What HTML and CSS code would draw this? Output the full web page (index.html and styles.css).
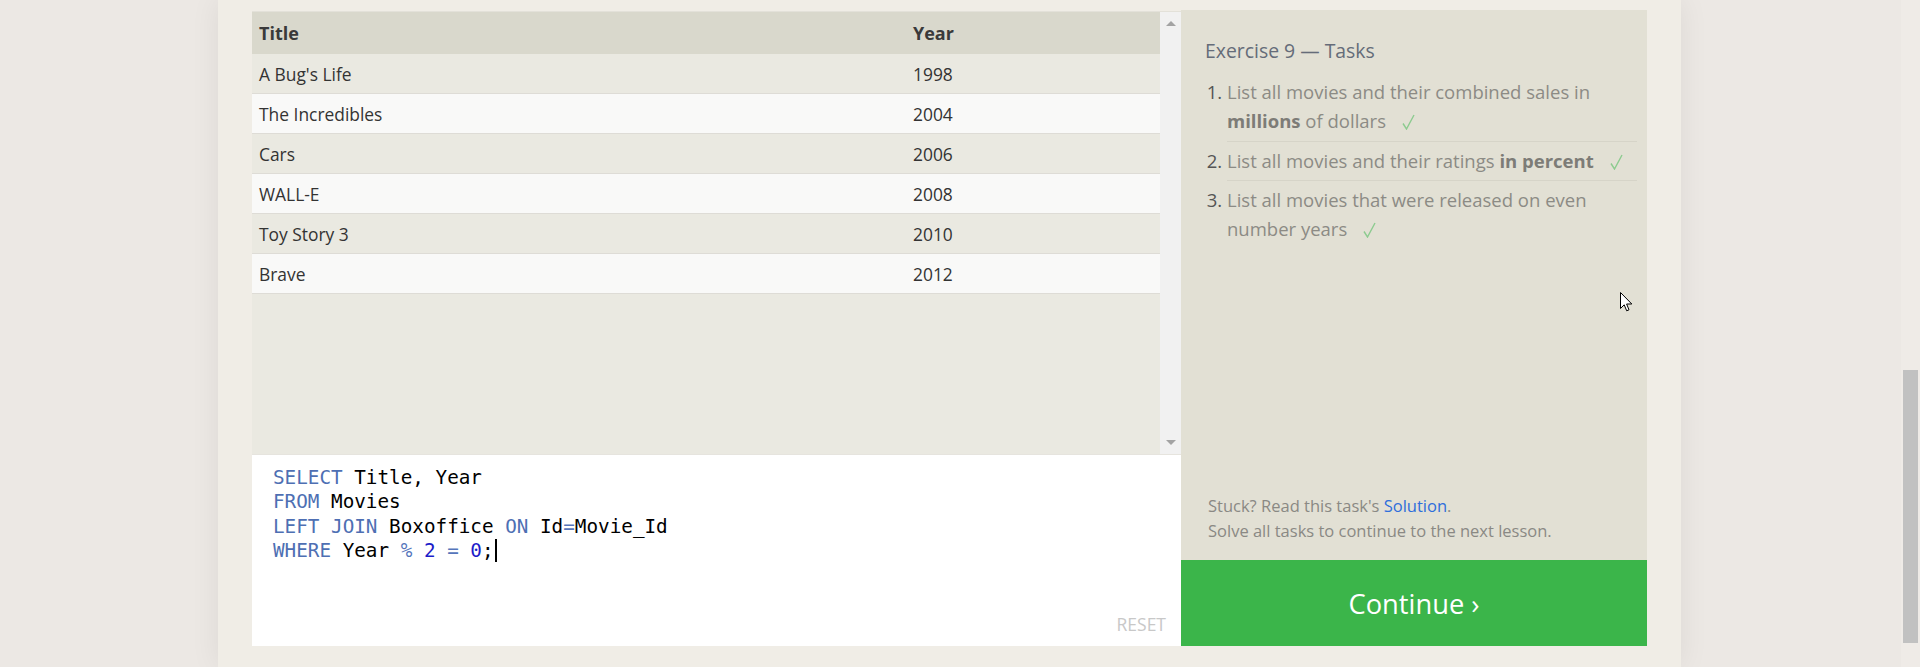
FILE: index.html
```html
<!DOCTYPE html>
<html lang="en">
<head>
<meta charset="utf-8">
<title>SQL Lesson - Exercise 9</title>
<link rel="stylesheet" href="styles.css">
</head>
<body>
<div class="gutter"></div>
<main class="page">
  <div class="lesson">
    <section class="workspace">
      <div class="results">
        <div class="table-wrap">
          <table class="data">
            <thead>
              <tr><th class="col-title">Title</th><th>Year</th></tr>
            </thead>
            <tbody>
              <tr><td>A Bug's Life</td><td>1998</td></tr>
              <tr><td>The Incredibles</td><td>2004</td></tr>
              <tr><td>Cars</td><td>2006</td></tr>
              <tr><td>WALL-E</td><td>2008</td></tr>
              <tr><td>Toy Story 3</td><td>2010</td></tr>
              <tr><td>Brave</td><td>2012</td></tr>
            </tbody>
          </table>
        </div>
        <div class="scrollbar">
          <span class="arrow arrow-up"></span>
          <span class="arrow arrow-down"></span>
        </div>
      </div>
      <div class="editor">
<pre class="code"><span class="kw">SELECT</span> Title, Year
<span class="kw">FROM</span> Movies
<span class="kw">LEFT JOIN</span> Boxoffice <span class="kw">ON</span> Id<span class="op">=</span>Movie_Id
<span class="kw">WHERE</span> Year <span class="op">%</span> <span class="num">2</span> <span class="op">=</span> <span class="num">0</span>;<span class="caret"></span></pre>
        <div class="reset">RESET</div>
      </div>
    </section>
    <aside class="tasks">
      <div class="tasks-body">
        <h3 class="tasks-title">Exercise 9 — Tasks</h3>
        <ol class="task-list">
          <li>List all movies and their combined sales in <strong>millions</strong> of dollars<svg class="check" width="13" height="16" viewBox="0 0 13 16"><polyline points="1,9.5 4.5,15 12,1" fill="none" stroke="#8ccb8f" stroke-width="1.4"/></svg></li>
          <li>List all movies and their ratings <strong>in percent</strong><svg class="check" width="13" height="16" viewBox="0 0 13 16"><polyline points="1,9.5 4.5,15 12,1" fill="none" stroke="#8ccb8f" stroke-width="1.4"/></svg></li>
          <li>List all movies that were released on even number years<svg class="check" width="13" height="16" viewBox="0 0 13 16"><polyline points="1,9.5 4.5,15 12,1" fill="none" stroke="#8ccb8f" stroke-width="1.4"/></svg></li>
        </ol>
      </div>
      <div class="tasks-footer">
        <div>Stuck? Read this task's <a class="link" href="#">Solution</a>.</div>
        <div>Solve all tasks to continue to the next lesson.</div>
      </div>
      <a class="continue" href="#">Continue ›</a>
      <svg class="pointer" width="13" height="21" viewBox="0 0 13 21"><path d="M0.5 0.5 L0.5 16.5 L4.2 12.8 L6.7 18.8 L9 17.8 L6.6 12 L11.8 12 Z" fill="#fff" stroke="#000" stroke-width="1"/></svg>
    </aside>
  </div>
</main>
<div class="gutter-right"></div>
<div class="page-scroll"><div class="page-thumb"></div></div>
</body>
</html>
```
FILE: styles.css
```css
html, body {
  margin: 0;
  padding: 0;
}
body {
  display: flex;
  height: 667px;
  overflow: hidden;
  background: #ece8e4;
  font-family: "Open Sans", "Liberation Sans", sans-serif;
}
.gutter {
  width: 218px;
  flex: none;
}
.page {
  width: 1463px;
  flex: none;
  box-sizing: border-box;
  padding: 10px 34px 0;
  background: #f0ede6;
  box-shadow: 0 0 28px rgba(0, 0, 0, 0.07);
  position: relative;
  z-index: 1;
}
.gutter-right {
  flex: 1;
}
.page-scroll {
  width: 19px;
  flex: none;
  background: #efebe7;
  position: relative;
}
.page-thumb {
  margin: 370px 2px 0 2px;
  height: 273px;
  background: #c1c1c1;
}
.lesson {
  display: flex;
  height: 636px;
}
.workspace {
  width: 929px;
  flex: none;
  display: flex;
  flex-direction: column;
  margin-top: 1px;
}
.results {
  display: flex;
  height: 443px;
  box-sizing: border-box;
  border-top: 1px solid #e3e1d9;
}
.table-wrap {
  flex: 1;
  background: #eae9e1;
}
.data {
  width: 100%;
  border-collapse: collapse;
  font-size: 17.4px;
  color: #333;
}
.data th {
  height: 42px;
  padding: 0 7px;
  text-align: left;
  background: #d9d8cc;
  color: #3a3a3a;
  font-weight: 700;
  font-size: 18px;
}
.data .col-title {
  width: 640px;
}
.data td {
  height: 39px;
  padding: 0 7px;
  border-bottom: 1px solid #dedcd6;
}
.data tbody tr:nth-child(odd) td {
  background: #eae9e1;
}
.data tbody tr:nth-child(even) td {
  background: #f9f9f8;
}
.scrollbar {
  width: 21px;
  flex: none;
  background: #f1f1f1;
  display: flex;
  flex-direction: column;
  justify-content: space-between;
  align-items: center;
  padding: 9px 0 9px;
  box-sizing: border-box;
}
.arrow {
  width: 0;
  height: 0;
  border-left: 5px solid transparent;
  border-right: 5px solid transparent;
}
.arrow-up {
  border-bottom: 5px solid #a3a3a3;
}
.arrow-down {
  border-top: 5px solid #a3a3a3;
}
.editor {
  height: 192px;
  box-sizing: border-box;
  background: #fff;
  border-top: 1px solid #e6e4de;
  padding: 11px 15px 11px 21px;
  display: flex;
  flex-direction: column;
}
.code {
  margin: 0;
  font-family: "DejaVu Sans Mono", "Liberation Mono", monospace;
  font-size: 19.3px;
  line-height: 24.3px;
  color: #000;
}
.kw {
  color: #4e6fb3;
}
.op {
  color: #5575bb;
}
.num {
  color: #1d1dc9;
}
.caret {
  display: inline-block;
  width: 0;
  height: 23px;
  border-left: 2px solid #000;
  vertical-align: -5px;
  margin-left: 1px;
}
.reset {
  margin-top: auto;
  align-self: flex-end;
  font-size: 17.5px;
  color: #c8c8c8;
  line-height: 22px;
}
.tasks {
  width: 466px;
  flex: none;
  background: #e2e0d4;
  display: flex;
  flex-direction: column;
  position: relative;
}
.tasks-body {
  flex: 1;
  padding: 27px 10px 0 24px;
}
.tasks-title {
  margin: 0;
  font-size: 19.4px;
  font-weight: 400;
  line-height: 27px;
  color: #656c79;
}
.task-list {
  margin: 9px 0 0;
  padding-left: 22px;
  color: #555;
  font-size: 18.5px;
  line-height: 28.8px;
}
.task-list li {
  padding: 5px 0;
  border-bottom: 1px solid #d6d4c8;
  color: #8c8b85;
}
.task-list li:last-child {
  border-bottom: none;
}
.task-list li::marker {
  color: #555;
}
.task-list strong {
  color: #7d7c77;
  font-weight: 700;
}
.check {
  margin-left: 16px;
  vertical-align: -2px;
}
.tasks-footer {
  padding: 0 20px 17px 27px;
  font-size: 16.5px;
  line-height: 25px;
  color: #8a8984;
}
.link {
  color: #2e6edb;
  text-decoration: none;
}
.continue {
  height: 86px;
  background: #3bb54a;
  color: #fff;
  font-size: 27.3px;
  text-decoration: none;
  display: flex;
  align-items: center;
  justify-content: center;
}
.pointer {
  position: absolute;
  left: 439px;
  top: 282px;
}
```
